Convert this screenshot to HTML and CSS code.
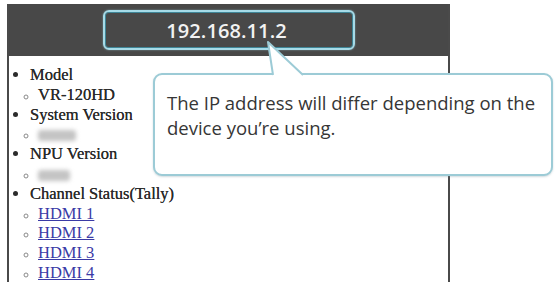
FILE: index.html
```html
<!DOCTYPE html>
<html>
<head>
<meta charset="utf-8">
<link rel="stylesheet" href="styles.css">
</head>
<body>
<div class="frame">
  <header class="bar">
    <div class="ip">192.168.11.2</div>
  </header>
  <ul class="info">
    <li>Model
      <ul class="sub"><li>VR-120HD</li></ul>
    </li>
    <li>System Version
      <ul class="sub"><li><span class="blur w1"></span></li></ul>
    </li>
    <li>NPU Version
      <ul class="sub"><li><span class="blur w2"></span></li></ul>
    </li>
    <li>Channel Status(Tally)
      <ul class="sub">
        <li><a href="#">HDMI 1</a></li>
        <li><a href="#">HDMI 2</a></li>
        <li><a href="#">HDMI 3</a></li>
        <li><a href="#">HDMI 4</a></li>
      </ul>
    </li>
  </ul>
</div>
<div class="callout">
  <p>The IP address will differ depending on the<br>device you’re using.</p>
</div>
<svg class="tail" width="60" height="40" viewBox="0 0 60 40">
  <polygon points="7,33 2,0 37,33" fill="#ffffff"/>
  <polyline points="7,33 2,0 37,33" fill="none" stroke="#9ccbd6" stroke-width="2" stroke-linejoin="round"/>
</svg>
</body>
</html>
```

FILE: styles.css
```css
html, body {
  margin: 0;
  padding: 0;
  background: #ffffff;
  height: 100%;
  overflow: hidden;
}

.frame {
  margin: 4px 0 0 7px;
  width: 439px;
  height: 278px;
  border-left: 2px solid #4a4a4a;
  border-right: 2px solid #4a4a4a;
  overflow: hidden;
}

.bar {
  height: 52px;
  background: #484848;
  display: flex;
  align-items: center;
  justify-content: center;
}

.ip {
  width: 244px;
  height: 36px;
  border: 2px solid #a6dbe8;
  border-radius: 6px;
  box-shadow: inset 0 0 0 1px #3f8596, 0 0 2px rgba(166, 219, 232, 0.6);
  display: flex;
  align-items: center;
  justify-content: center;
  color: #f2f2f2;
  font-family: "Open Sans", "Liberation Sans", sans-serif;
  font-weight: 600;
  font-size: 20px;
  letter-spacing: 0.1px;
  padding-right: 4px;
}

.info {
  margin: 9px 0 0 0;
  padding: 0 0 0 21px;
  list-style: disc;
  font-family: "Liberation Serif", "Times New Roman", serif;
  font-size: 16.5px;
  line-height: 19.8px;
  color: #2b2b2b;
  text-shadow: 0 0 0.4px #2b2b2b;
}

.sub {
  margin: 0;
  padding: 0 0 0 8px;
  list-style: circle;
}

.sub li::marker {
  color: #8a8a8a;
  font-size: 12px;
}

.sub a {
  color: #3a3aa6;
  text-decoration: underline;
  text-shadow: none;
}

.blur {
  display: inline-block;
  height: 11px;
  background: #c4c4c4;
  filter: blur(2px);
  vertical-align: middle;
  border-radius: 3px;
}

.w1 { width: 38px; }
.w2 { width: 32px; }

.callout {
  position: absolute;
  left: 153px;
  top: 73px;
  width: 396px;
  height: 99px;
  border: 2px solid #9ccbd6;
  border-radius: 9px;
  background: #ffffff;
  box-shadow: 0 1px 2px rgba(120, 150, 160, 0.35);
  box-sizing: content-box;
}

.callout p {
  margin: 15px 0 0 12px;
  font-family: "Open Sans", "Noto Sans", sans-serif;
  font-size: 18.5px;
  line-height: 25px;
  color: #363636;
}

.tail {
  position: absolute;
  left: 266px;
  top: 42px;
  overflow: visible;
}
```
